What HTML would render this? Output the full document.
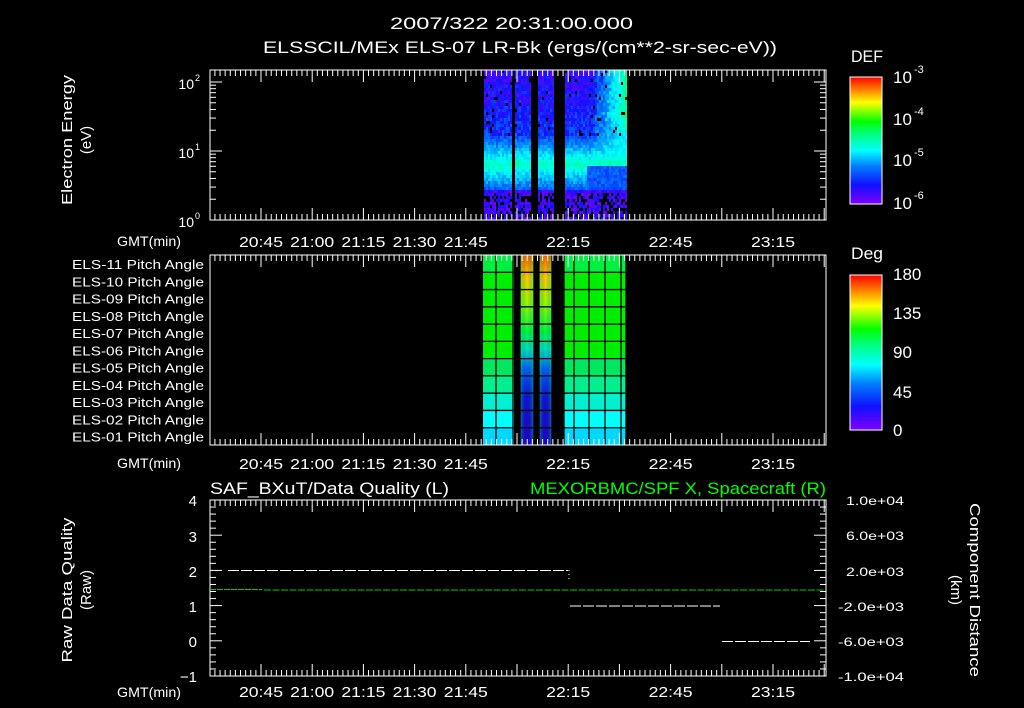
<!DOCTYPE html>
<html><head><meta charset="utf-8">
<style>
html,body{margin:0;padding:0;background:#000;width:1024px;height:708px;overflow:hidden}
svg{display:block}
text{font-family:"Liberation Sans",sans-serif;fill:#fff}
</style></head><body>
<svg id="s" width="1024" height="708" viewBox="0 0 1024 708" xmlns="http://www.w3.org/2000/svg" font-size="14">
<defs>
<linearGradient id="cb" x1="0" y1="1" x2="0" y2="0">
<stop offset="0" stop-color="#8000ff"/><stop offset="0.15" stop-color="#1010ff"/>
<stop offset="0.3" stop-color="#0080ff"/><stop offset="0.42" stop-color="#00ffff"/>
<stop offset="0.55" stop-color="#00ff80"/><stop offset="0.65" stop-color="#00ff00"/>
<stop offset="0.8" stop-color="#ffff00"/><stop offset="0.9" stop-color="#ff8000"/>
<stop offset="1" stop-color="#ff0000"/></linearGradient>
<linearGradient id="pa" x1="0" y1="0" x2="0" y2="1">
<stop offset="0" stop-color="#ff6000"/><stop offset="0.12" stop-color="#ffd000"/>
<stop offset="0.25" stop-color="#a0ff00"/><stop offset="0.4" stop-color="#00ff40"/>
<stop offset="0.5" stop-color="#00e0d0"/><stop offset="0.6" stop-color="#0060ff"/>
<stop offset="0.75" stop-color="#1010e0"/><stop offset="1" stop-color="#2000d0"/></linearGradient>
<linearGradient id="pah" x1="0" y1="0" x2="1" y2="0">
<stop offset="0" stop-color="#00ff80" stop-opacity="0.45"/><stop offset="0.5" stop-color="#000" stop-opacity="0"/>
<stop offset="1" stop-color="#00ff80" stop-opacity="0.45"/></linearGradient>
</defs>
<g id="data"></g>
<g id="axes" stroke="#fff" fill="none" stroke-width="1"></g>
<text x="390" y="29" font-size="17" textLength="243" lengthAdjust="spacingAndGlyphs">2007/322 20:31:00.000</text>
<text x="263" y="53" font-size="17" textLength="514" lengthAdjust="spacingAndGlyphs">ELSSCIL/MEx ELS-07 LR-Bk  (ergs/(cm**2-sr-sec-eV))</text>
<text x="72" y="140" text-anchor="middle" transform="rotate(-90 72 140)" font-size="15" textLength="130" lengthAdjust="spacingAndGlyphs">Electron Energy</text>
<text x="91" y="140" text-anchor="middle" transform="rotate(-90 91 140)" font-size="15">(eV)</text>
<text x="194" y="89" text-anchor="end" font-size="14">10</text><text x="195" y="81" font-size="9">2</text>
<text x="194" y="158" text-anchor="end" font-size="14">10</text><text x="195" y="150" font-size="9">1</text>
<text x="194" y="227" text-anchor="end" font-size="14">10</text><text x="195" y="219" font-size="9">0</text>
<text x="117" y="246" font-size="14" textLength="64" lengthAdjust="spacingAndGlyphs">GMT(min)</text>
<text x="117" y="468" font-size="14" textLength="64" lengthAdjust="spacingAndGlyphs">GMT(min)</text>
<text x="117" y="697" font-size="14" textLength="64" lengthAdjust="spacingAndGlyphs">GMT(min)</text>
<g id="tl"></g>
<text x="851" y="62" font-size="17" textLength="32" lengthAdjust="spacingAndGlyphs">DEF</text>
<rect x="850" y="77" width="32" height="127" fill="url(#cb)" stroke="#fff"/>
<text x="893" y="83" font-size="17">10</text><text x="914" y="73" font-size="11">-3</text>
<text x="893" y="125" font-size="17">10</text><text x="914" y="115" font-size="11">-4</text>
<text x="893" y="166" font-size="17">10</text><text x="914" y="156" font-size="11">-5</text>
<text x="893" y="209" font-size="17">10</text><text x="914" y="199" font-size="11">-6</text>
<text x="851" y="259" font-size="17" textLength="32" lengthAdjust="spacingAndGlyphs">Deg</text>
<rect x="850" y="275" width="32" height="155" fill="url(#cb)" stroke="#fff"/>
<text x="893" y="280" font-size="17">180</text>
<text x="893" y="319" font-size="17">135</text>
<text x="893" y="358" font-size="17">90</text>
<text x="893" y="398" font-size="17">45</text>
<text x="893" y="436" font-size="17">0</text>
<text x="210" y="494" font-size="17" textLength="239" lengthAdjust="spacingAndGlyphs">SAF_BXuT/Data Quality (L)</text>
<text x="530" y="494" font-size="17" textLength="296" lengthAdjust="spacingAndGlyphs" style="fill:#00ff00">MEXORBMC/SPF X, Spacecraft (R)</text>
<text x="72" y="590" text-anchor="middle" transform="rotate(-90 72 590)" font-size="15" textLength="145" lengthAdjust="spacingAndGlyphs">Raw Data Quality</text>
<text x="91" y="590" text-anchor="middle" transform="rotate(-90 91 590)" font-size="15">(Raw)</text>
<text x="970" y="590" text-anchor="middle" transform="rotate(90 970 590)" font-size="15" textLength="174" lengthAdjust="spacingAndGlyphs">Component Distance</text>
<text x="951" y="590" text-anchor="middle" transform="rotate(90 951 590)" font-size="15">(km)</text>
<g font-size="15" text-anchor="end">
<text x="197" y="506">4</text><text x="197" y="542">3</text><text x="197" y="577">2</text>
<text x="197" y="612">1</text><text x="197" y="647">0</text><text x="197" y="682">−1</text></g>
<g font-size="12">
<text x="846" y="505" textLength="58" lengthAdjust="spacingAndGlyphs">1.0e+04</text>
<text x="846" y="540" textLength="58" lengthAdjust="spacingAndGlyphs">6.0e+03</text>
<text x="846" y="576" textLength="58" lengthAdjust="spacingAndGlyphs">2.0e+03</text>
<text x="838" y="611" textLength="66" lengthAdjust="spacingAndGlyphs">-2.0e+03</text>
<text x="838" y="646" textLength="66" lengthAdjust="spacingAndGlyphs">-6.0e+03</text>
<text x="838" y="681" textLength="66" lengthAdjust="spacingAndGlyphs">-1.0e+04</text></g>
<g id="pl"></g>
</svg>
<script>
(function(){
var NS="http://www.w3.org/2000/svg";
var data=document.getElementById('data'),axes=document.getElementById('axes'),tl=document.getElementById('tl'),pl=document.getElementById('pl');
function el(p,tag,a,txt){var e=document.createElementNS(NS,tag);for(var k in a)e.setAttribute(k,a[k]);if(txt)e.textContent=txt;p.appendChild(e);return e;}
var seed=987654321;function r(){seed^=seed<<13;seed^=seed>>>17;seed^=seed<<5;return ((seed>>>0)%100000)/100000;}
function cmap(v){var st=[[0,128,0,255],[0.15,16,16,255],[0.3,0,128,255],[0.42,0,255,255],[0.55,0,255,128],[0.65,0,255,0],[0.8,255,255,0],[0.9,255,128,0],[1,255,0,0]];
v=Math.max(0,Math.min(1,v));for(var i=1;i<st.length;i++){if(v<=st[i][0]){var a=st[i-1],b=st[i],t=(v-a[0])/(b[0]-a[0]);return 'rgb('+Math.round(a[1]+(b[1]-a[1])*t)+','+Math.round(a[2]+(b[2]-a[2])*t)+','+Math.round(a[3]+(b[3]-a[3])*t)+')';}}return '#f00';}
var blocks=[[484,511],[515,531],[538,553],[565,627]];
var s='';
blocks.forEach(function(b){for(var x=b[0];x<b[1];x+=2){for(var y=70;y<218;y+=3){
 var v;
 if(y<135)v=0.02+0.16*r()+(y-70)/65*0.1;
 else if(y<190){var c=1-Math.abs(y-163)/28;v=0.18+0.25*c+0.1*r();}
 else v=0.02+0.14*r();
 if(x>593&&y<175){var g=(x-593)/34;var f=y<115?1:Math.max(0,1-(y-115)/60);v=v*(1-f*g)+(0.42+0.15*r())*f*g+0.05*f;}
 if(x>585&&y>=165&&y<195)v=Math.min(v,0.2+0.1*r());
 if(y>192&&r()<0.35)continue;
 if(y<135&&r()<0.05)continue;
 s+='<rect x="'+x+'" y="'+y+'" width="2" height="3" fill="'+cmap(v)+'"/>';}}});
data.insertAdjacentHTML('beforeend',s);
var rowc=['#00f040','#00ee00','#00ee00','#00ee00','#00ee00','#00ee00','#00e860','#00f090','#00f0d0','#00ffff','#00d8ff'];
s='';var y0=255,rh=190/11;
[[483,514],[564,626]].forEach(function(b){for(var i=0;i<11;i++)s+='<rect x="'+b[0]+'" y="'+(y0+i*rh)+'" width="'+(b[1]-b[0])+'" height="'+rh+'" fill="'+rowc[i]+'"/>';});
s+='<rect x="520" y="255" width="14" height="190" fill="url(#pa)"/><rect x="539" y="255" width="13" height="190" fill="url(#pa)"/>';
s+='<rect x="520" y="255" width="14" height="190" fill="url(#pah)"/><rect x="539" y="255" width="13" height="190" fill="url(#pah)"/>';
[496,513,520,534,539,552,564,574,589,605,621,626].forEach(function(x){s+='<line x1="'+x+'" y1="255" x2="'+x+'" y2="445" stroke="#000" stroke-width="1.3"/>';});
for(var i=1;i<11;i++)s+='<line x1="483" y1="'+(y0+i*rh)+'" x2="626" y2="'+(y0+i*rh)+'" stroke="#000" stroke-width="1.3"/>';
data.insertAdjacentHTML('beforeend',s);
for(var i=0;i<11;i++){var n=11-i;el(tl,'text',{x:72,y:y0+i*rh+14,'font-size':'13',textLength:'132',lengthAdjust:'spacingAndGlyphs'},'ELS-'+(n<10?'0':'')+n+' Pitch Angle');}
var X0=210,X1=826,px15=51.2,xs=261-px15;
function frame(t,b){var a='<rect x="'+X0+'" y="'+t+'" width="'+(X1-X0)+'" height="'+(b-t)+'"/>';
 for(var k=0;;k++){var x=xs+k*px15/10;if(x>X1)break;if(x<X0)continue;var L=(k%10==0)?12:6;
 a+='<line x1="'+x+'" y1="'+b+'" x2="'+x+'" y2="'+(b-L)+'"/><line x1="'+x+'" y1="'+t+'" x2="'+x+'" y2="'+(t+L)+'"/>';}
 return a;}
var a='';
a+=frame(70,220);a+=frame(255,445);a+=frame(500,676);
var dec=69;for(var d=0;d<3;d++)for(var m=1;m<10;m++){var y=220-(d+Math.log10(m))*dec;if(y<70)break;var L=m==1?12:6;a+='<line x1="'+X0+'" y1="'+y+'" x2="'+(X0+L)+'" y2="'+y+'"/><line x1="'+X1+'" y1="'+y+'" x2="'+(X1-L)+'" y2="'+y+'"/>';}
for(var k=0;k<=25;k++){var y=676-k*176/25;var L=k%5==0?12:6;a+='<line x1="'+X0+'" y1="'+y+'" x2="'+(X0+L)+'" y2="'+y+'"/><line x1="'+X1+'" y1="'+y+'" x2="'+(X1-L)+'" y2="'+y+'"/>';}
axes.insertAdjacentHTML('beforeend',a);
var lab=['20:45','21:00','21:15','21:30','21:45','','22:15','','22:45','','23:15'];
[247,469,697].forEach(function(yy){lab.forEach(function(t,k){if(t)el(tl,'text',{x:261+k*px15-22,y:yy,'font-size':'15',textLength:'44',lengthAdjust:'spacingAndGlyphs'},t);});});
var p='';
function dash(x1,x2,y,c,dl,gap){for(var x=x1;x<x2;x+=dl+gap)p+='<line x1="'+x+'" y1="'+y+'" x2="'+Math.min(x+dl,x2)+'" y2="'+y+'" stroke="'+c+'"/>';}
dash(228,568,570.5,'#fff',11,2);dash(570,720,606,'#fff',11,2);dash(722,810,641.5,'#fff',11,2);
p+='<line x1="569" y1="570" x2="569" y2="582" stroke="#fff" stroke-dasharray="1 3"/>';
dash(210,262,589.5,'#0c0',6,1);dash(264,826,590,'#0c0',7,1.5);
pl.insertAdjacentHTML('beforeend',p);
})();
</script>
</body></html>
